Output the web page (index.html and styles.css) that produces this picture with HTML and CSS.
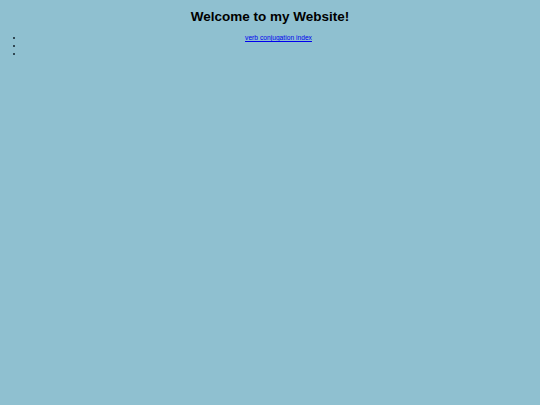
FILE: index.html
```html
<!DOCTYPE html>
<html>
<head>
<meta charset="utf-8">
<link rel="stylesheet" href="styles.css">
</head>
<body>
<h1 class="title">Welcome to my Website!</h1>
<ul class="nav">
<li class="item"><span class="dot"></span><span class="label"><a href="#">verb conjugation index</a></span></li>
<li class="item"><span class="dot"></span><span class="label"></span></li>
<li class="item"><span class="dot"></span><span class="label"></span></li>
</ul>
</body>
</html>
```
FILE: styles.css
```css
html, body {
  background: #8fc0d0;
}
body {
  margin: 8px;
  font-family: "Liberation Sans", Arial, sans-serif;
}
.title {
  font-size: 13.5px;
  text-align: center;
  margin: 0 0 8px 0;
  line-height: 18px;
  color: #000;
}
.nav {
  margin: 0;
  padding: 0;
  list-style: none;
}
.item {
  display: flex;
  align-items: center;
  height: 8px;
}
.dot {
  width: 2px;
  height: 2px;
  border-radius: 50%;
  background: #10202a;
  margin-left: 5px;
  flex: none;
}
.label {
  flex: 1;
  margin-left: 10px;
  text-align: center;
  font-size: 6.7px;
  line-height: 8px;
}
.label a {
  color: #0000ee;
}
```
